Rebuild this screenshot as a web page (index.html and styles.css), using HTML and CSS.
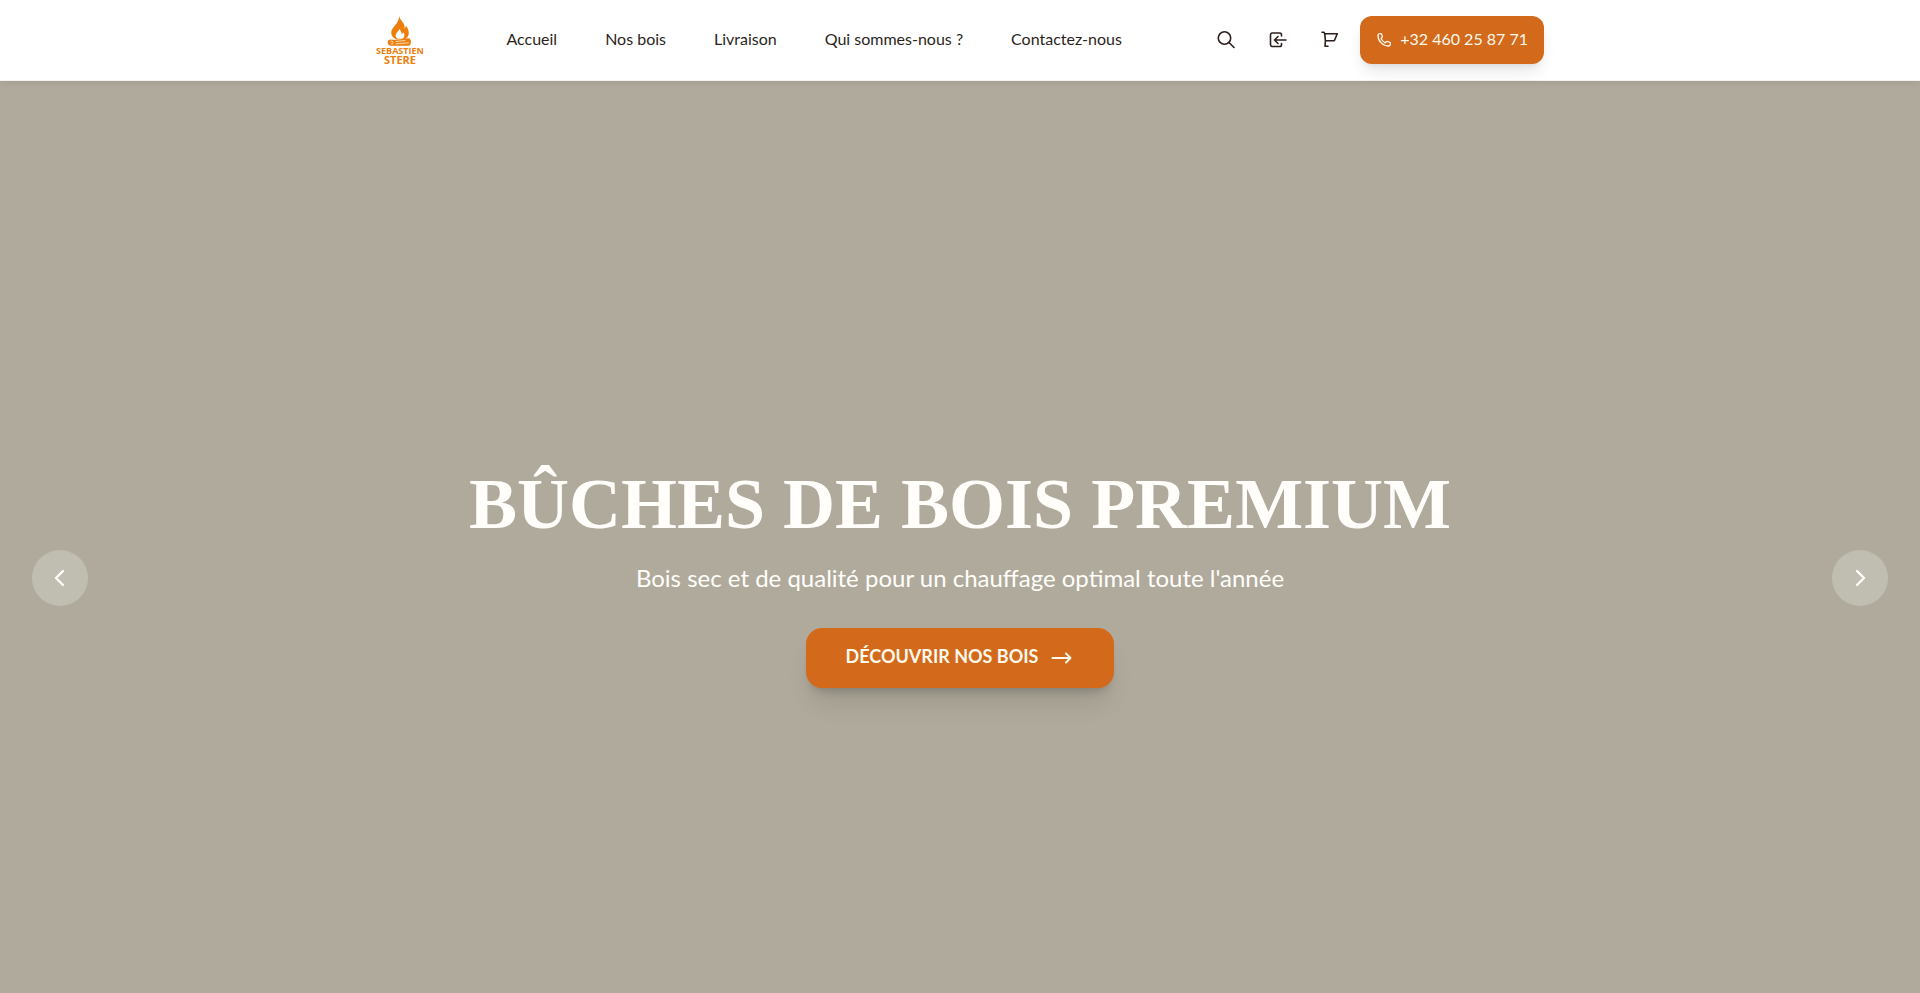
FILE: index.html
```
<!DOCTYPE html>
<html lang="fr">

<head>
  <meta charset="UTF-8">
  <meta name="viewport" content="width=device-width, initial-scale=1.0">
  <title>Sebastien Stere - Bûches de bois premium</title>
  <link rel="stylesheet" href="styles.css">
</head>

<body>
  <header class="site-header">
    <div class="header-inner">
      <!-- Logo -->
      <a class="logo" href="#">
        <svg width="48" height="48" viewBox="0 0 48 48">
          <path class="flame" d="M23.200 0c.5 3.500 4 5.500 5.200 9.500.3 1.200.3 2.200.1 3.200.8-.7 1.200-1.700 1.300-2.900 3 3.200 3.800 7.400 2.200 10.400-.9 1.700-2.600 2.800-4.600 3.300h-6.500c-3.600-1-6-4-5.600-7.700.5-4.800 7.600-8 7.900-15.800z"/>
          <path class="inner-flame" d="M23.200 13c2 2 2.600 3.500 2.300 5.300 1-.5 1.600-1.200 1.900-2 1.700 2.500 1.200 4.900-.9 6.500h-4.700c-2.500-1.500-2.800-3.700-1.200-5.900 1.100-1.400 2.500-2.300 2.600-3.900z"/>
          <path class="flame" d="M14.500 23.500c5 1 12-.4 17.500-1.300 1.700-.2 2.700.8 2.700 2.300.8 1.700 0 4.800-2 5.200H15.500c-4.700.3-5-6.200-1-6.200z"/>
          <path class="grain" d="M15 25.200c1.500-.3 2.300.6 2.200 1.700s-1.500 1.500-2.300.7M20 25.500l9-1M20 27.800l12.500-1"/>
          <text class="logo-name" x="24" y="38">SEBASTIEN</text>
          <text class="logo-sub" x="24" y="48">STERE</text>
        </svg>
      </a>

      <!-- Navigation -->
      <nav class="main-nav">
        <a href="#">Accueil</a>
        <a href="#">Nos bois</a>
        <a href="#">Livraison</a>
        <a href="#">Qui sommes-nous ?</a>
        <a href="#">Contactez-nous</a>
      </nav>

      <!-- Actions -->
      <div class="actions">
        <button class="icon-btn" type="button" aria-label="Rechercher">
          <svg class="icon" viewBox="0 0 20 20">
            <circle cx="8.500" cy="8" r="6.200"/>
            <path d="M13 12.500l5 5"/>
          </svg>
        </button>
        <button class="icon-btn" type="button" aria-label="Connexion">
          <svg class="icon" viewBox="0 0 20 20">
            <path d="M13.500 6V4.800a1.800 1.800 0 0 0-1.800-1.800H4.300a1.800 1.800 0 0 0-1.800 1.800v9.900a1.800 1.800 0 0 0 1.800 1.800h7.400a1.800 1.800 0 0 0 1.800-1.800V13.500"/>
            <path d="M18 10H6.500M10 6.500L6.500 10l3.500 3.500"/>
          </svg>
        </button>
        <button class="icon-btn" type="button" aria-label="Panier">
          <svg class="icon" viewBox="0 0 20 20">
            <path d="M2 2.200h1.800l1 1.500h12.500l-3 7H5.300M4.800 3.700l.6 7-.4 5.500h3"/>
          </svg>
        </button>
        <a class="phone-btn" href="tel:+32460258771">
          <svg class="phone-icon" viewBox="0 0 16 16">
            <path d="M2 3.400C2 2.300 2.700 1.700 3.700 1.700h1.100c.5 0 .9.3 1 .8l.5 2c.1.400 0 .8-.3 1.100l-1 .9c.9 1.900 2.400 3.400 4.300 4.300l1-1c.3-.3.700-.4 1.100-.3l2.100.6c.5.1.8.5.8 1v1c0 1-.7 1.900-1.800 1.900C6.800 14 2 9.200 2 3.400z"/>
          </svg>
          <span>+32 460 25 87 71</span>
        </a>
      </div>
    </div>
  </header>

  <main class="hero">
    <button class="slide-btn slide-prev" type="button" aria-label="Précédent">
      <svg class="chevron" viewBox="0 0 24 24"><path d="M15 5l-7 7 7 7"/></svg>
    </button>

    <div class="hero-content">
      <h1>BÛCHES DE BOIS PREMIUM</h1>
      <p>Bois sec et de qualité pour un chauffage optimal toute l'année</p>
      <a class="cta" href="#">
        <span>DÉCOUVRIR NOS BOIS</span>
        <svg class="arrow" viewBox="0 0 24 24"><path d="M2.500 12h18M16 7.500l4.500 4.500-4.500 4.500"/></svg>
      </a>
    </div>

    <button class="slide-btn slide-next" type="button" aria-label="Suivant">
      <svg class="chevron" viewBox="0 0 24 24"><path d="M9 5l7 7-7 7"/></svg>
    </button>
  </main>
</body>

</html>
```
FILE: styles.css
```
* {
  box-sizing: border-box;
}

body {
  margin: 0;
  font-family: Lato, "Liberation Sans", sans-serif;
  font-size: 16px;
  line-height: 22px;
  color: #2c1f1c;
}

a {
  color: inherit;
  text-decoration: none;
}

svg {
  display: block;
  fill: none;
  stroke: currentColor;
  stroke-linecap: round;
  stroke-linejoin: round;
}

/* Header */
.site-header {
  position: relative;
  z-index: 1;
  background: #fff;
  border-bottom: 1px solid #f3f2ec;
  box-shadow: 0 4px 6px -1px rgba(0, 0, 0, 0.06);
}

.header-inner {
  display: flex;
  align-items: center;
  justify-content: space-between;
  max-width: 1200px;
  margin: 0 auto;
  padding: 16px;
}

.logo svg {
  overflow: visible;
}

.logo .flame {
  fill: #ec7f0c;
  stroke: none;
}

.logo .inner-flame {
  fill: #fff;
  stroke: none;
}

.logo .grain {
  stroke: #fff;
  stroke-width: 0.7;
}

.logo text {
  fill: #ec7f0c;
  stroke: none;
  font-family: "Open Sans", sans-serif;
  font-weight: 700;
  text-anchor: middle;
}

.logo-name {
  font-size: 9px;
}

.logo-sub {
  font-size: 11px;
}

.main-nav {
  display: flex;
  gap: 48px;
  padding-bottom: 2px;
}

.actions {
  display: flex;
  align-items: center;
  gap: 8px;
}

.icon-btn {
  padding: 12px;
  border: none;
  background: none;
  color: inherit;
  cursor: pointer;
}

.icon {
  width: 20px;
  height: 20px;
  stroke-width: 1.6;
}

.phone-btn {
  display: flex;
  align-items: center;
  gap: 8px;
  padding: 12px 16px;
  border-radius: 12px;
  background: #d2691b;
  color: #fff9ec;
  box-shadow: 0 10px 15px -3px rgba(0, 0, 0, 0.1), 0 4px 6px -4px rgba(0, 0, 0, 0.1);
}

.phone-btn span {
  padding-bottom: 2px;
}

.phone-icon {
  width: 16px;
  height: 16px;
  stroke-width: 1.3;
}

/* Hero */
.hero {
  position: relative;
  display: flex;
  align-items: center;
  justify-content: center;
  height: 100vh;
  background: #b0aa9c;
  color: #fffefa;
  text-align: center;
}

.hero-content {
  display: flex;
  flex-direction: column;
  align-items: center;
}

.hero h1 {
  margin: 0 0 24px;
  font-family: "Liberation Serif", serif;
  font-size: 72px;
  line-height: 72px;
  font-weight: 700;
}

.hero p {
  margin: 0 0 36px;
  font-size: 24px;
  line-height: 28px;
}

.cta {
  display: flex;
  align-items: center;
  gap: 12px;
  padding: 16px 40px;
  border-radius: 16px;
  background: #d2691b;
  color: #fff9ec;
  font-size: 18px;
  line-height: 24px;
  font-weight: 700;
  box-shadow: 0 20px 25px -5px rgba(0, 0, 0, 0.1), 0 8px 10px -6px rgba(0, 0, 0, 0.2);
}

.cta span {
  padding-bottom: 4px;
}

.arrow {
  width: 24px;
  height: 24px;
  stroke-width: 2;
}

.slide-btn {
  position: absolute;
  top: 50%;
  padding: 16px;
  border: none;
  border-radius: 50%;
  background: rgba(218, 219, 208, 0.4);
  color: #fffefa;
  transform: translateY(-50%);
  cursor: pointer;
}

.slide-prev {
  left: 32px;
}

.slide-next {
  right: 32px;
}

.chevron {
  width: 24px;
  height: 24px;
  stroke-width: 2.4;
}
```
